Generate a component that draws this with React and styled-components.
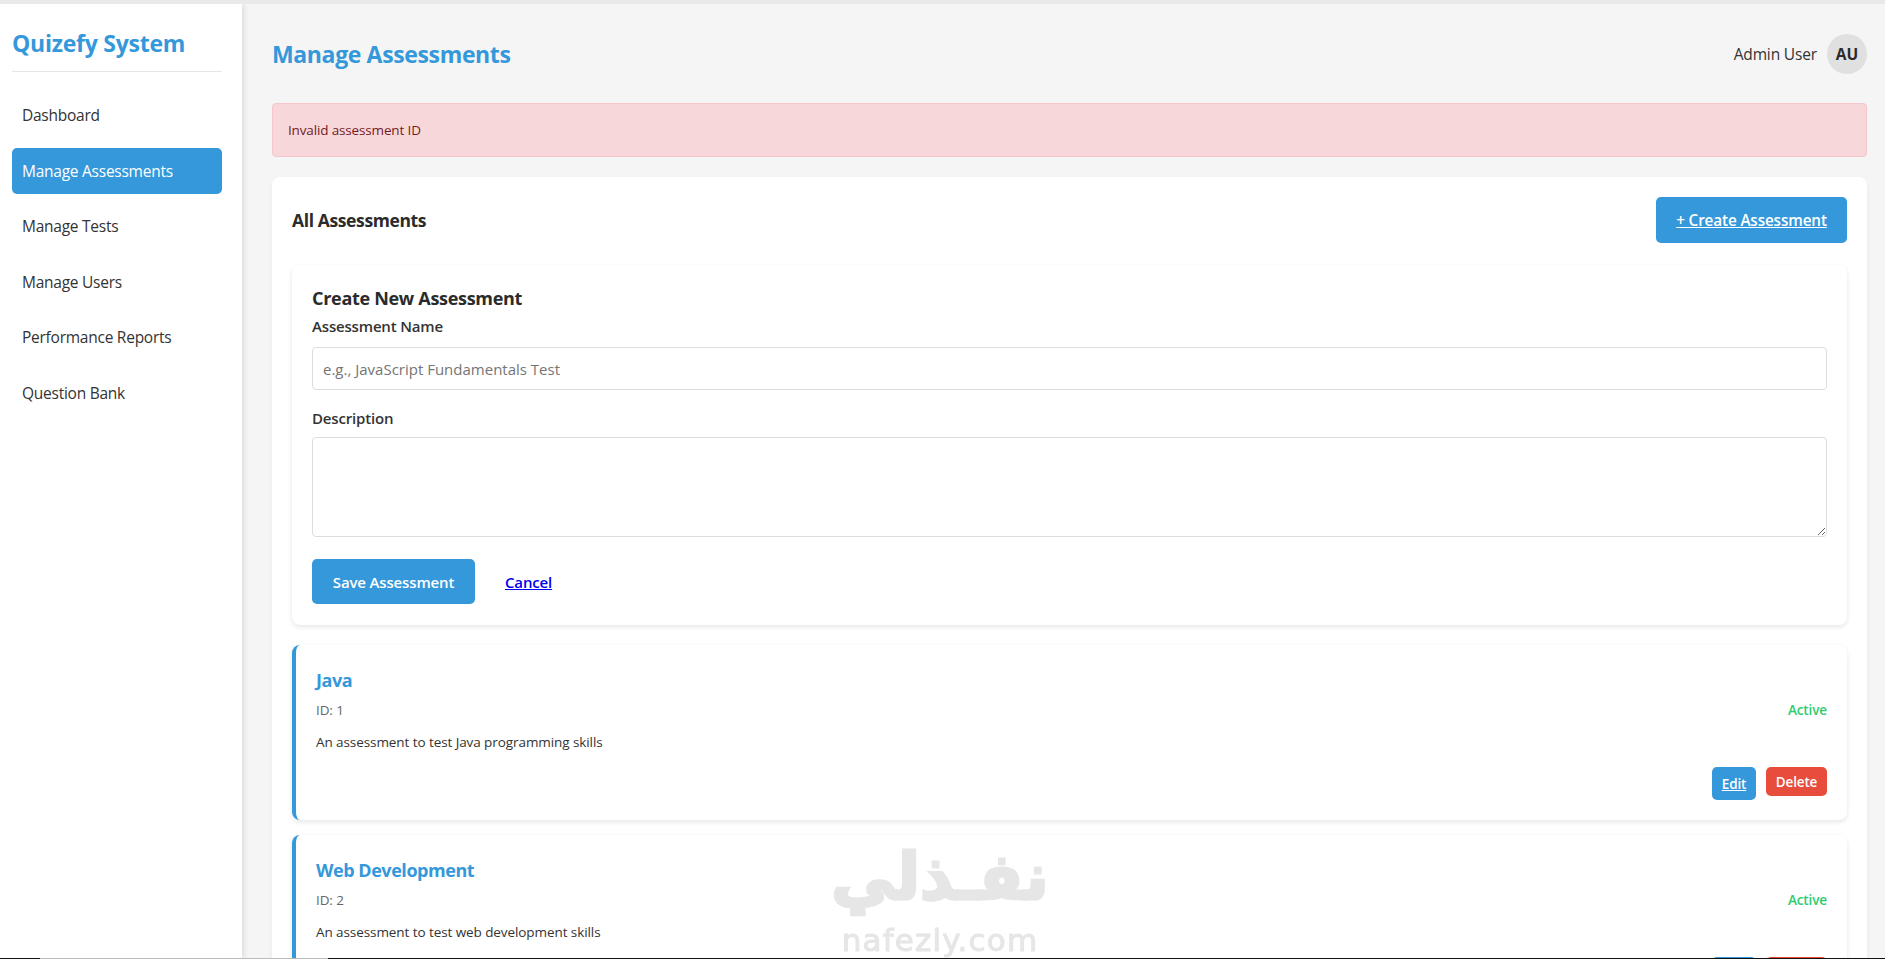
import React from "react";
import styled, { createGlobalStyle } from "styled-components";

const Global = createGlobalStyle`
  * { box-sizing: border-box; }
  html, body { margin: 0; padding: 0; height: 959px; overflow: hidden; }
  body { font-family: "Open Sans", "Noto Sans", "Liberation Sans", sans-serif; color: #2b2b2b; background: #f5f5f5; }
`;
const TopEdge = styled.div`height: 4px; background: #e9e9e9;`;
const Shell = styled.div`display: flex; height: 955px; overflow: hidden;`;
const Sidebar = styled.aside`
  width: 242px; flex: none; background: #fff; padding: 19px 20px 0 12px;
  box-shadow: 2px 0 5px rgba(0,0,0,.1);
  position: relative;
`;
const Logo = styled.h2`
  margin: 0; height: 49px; font-size: 23px; line-height: 40px; font-weight: 700;
  letter-spacing: -.25px; color: #3498db; border-bottom: 1px solid #e6e6e6; white-space: nowrap;
`;
const Nav = styled.nav`display: flex; flex-direction: column; gap: 9.5px; margin-top: 20px;`;
const NavItem = styled.a`
  display: flex; align-items: center; height: 46px; padding: 0 10px; border-radius: 5px;
  font-size: 15.5px; letter-spacing: -.25px;
  color: ${p => (p.$active ? "#fff" : "#333")};
  background: ${p => (p.$active ? "#3498db" : "transparent")};
`;
const Main = styled.main`flex: 1; min-width: 0; padding: 0 18px 0 30px; height: 955px; overflow: hidden;`;
const Header = styled.header`
  display: flex; justify-content: space-between; align-items: center; height: 99px;
`;
const PageTitle = styled.h1`margin: 0; font-size: 23px; font-weight: 700; letter-spacing: -.36px; color: #3498db;`;
const UserBox = styled.div`display: flex; align-items: center; gap: 10px; font-size: 15.5px; letter-spacing: -.15px; color: #333;`;
const Avatar = styled.div`
  width: 40px; height: 40px; border-radius: 50%; background: #e0e0e0; font-weight: 700; font-size: 15.5px;
  display: flex; align-items: center; justify-content: center; color: #2b2b2b; letter-spacing: 0;
`;
const Alert = styled.div`
  height: 54px; padding: 0 15px; display: flex; align-items: center; background: #f8d7da; border: 1px solid #f5c6cb;
  border-radius: 4px; color: #721c24; font-size: 13.5px; letter-spacing: -.15px; margin-bottom: 20px;
`;
const Panel = styled.section`
  background: #fff; border-radius: 8px; padding: 20px; box-shadow: 0 2px 5px rgba(0,0,0,.05);
`;
const PanelHead = styled.div`display: flex; justify-content: space-between; align-items: center; margin-bottom: 22px;`;
const PanelTitle = styled.h2`margin: 0; font-size: 17.5px; font-weight: 700; letter-spacing: -.38px; color: #2b2b2b;`;
const Button = styled.a`
  display: inline-flex; align-items: center; justify-content: center; border-radius: 5px;
  color: #fff; background: ${p => p.$bg || "#3498db"}; font-weight: 600;
  font-size: ${p => p.$size || 15}px; letter-spacing: -.15px;
  width: ${p => p.$w}px; height: ${p => p.$h}px;
  text-decoration: ${p => (p.$link ? "underline" : "none")};
`;
const FormCard = styled.div`
  border-radius: 8px; padding: 21px 20px 20px; height: 360px; box-shadow: 0 2px 5px rgba(0,0,0,.1); margin-bottom: 20px;
  display: flex; flex-direction: column;
`;
const FormTitle = styled.h3`margin: 0 0 5px; font-size: 18px; line-height: 25px; font-weight: 700; letter-spacing: -.3px; color: #2b2b2b;`;
const Label = styled.label`display: block; font-size: 15px; line-height: 21px; font-weight: 600; letter-spacing: -.17px; color: #333;`;
const Input = styled.input`
  display: block; width: 100%; height: 43px; margin-top: 10px; margin-bottom: 18px; padding: 0 10px; border: 1px solid #ddd; border-radius: 4px;
  font: inherit; font-size: 15px; letter-spacing: 0; outline: none;
  &::placeholder { color: #757575; }
`;
const TextArea = styled.textarea`
  display: block; width: 100%; height: 100px; margin-top: 8px; padding: 10px; border: 1px solid #ddd; border-radius: 4px; font: inherit; outline: none;
`;
const FormActions = styled.div`display: flex; align-items: center; gap: 30px; margin-top: 22px;`;
const CancelLink = styled.a`color: #0000ee; text-decoration: underline; font-size: 15px; font-weight: 600; letter-spacing: -.15px;`;
const Item = styled.article`
  height: 175px; margin-bottom: 15px; padding: 20px; border-left: 4px solid #3498db; border-radius: 8px;
  box-shadow: 0 2px 5px rgba(0,0,0,.1); display: flex; flex-direction: column;
`;
const ItemTitle = styled.h3`margin: 0; font-size: 18px; line-height: 30px; font-weight: 700; letter-spacing: -.45px; color: #3498db;`;
const MetaRow = styled.div`display: flex; justify-content: space-between; align-items: center; margin-top: 5px; height: 20px; font-size: 13.5px; letter-spacing: -.12px; color: #666;`;
const Status = styled.span`color: #2ecc71; font-weight: 600;`;
const Desc = styled.p`margin: 12px 0 0; font-size: 13.5px; line-height: 20px; letter-spacing: -.08px; color: #333;`;
const ItemActions = styled.div`display: flex; justify-content: flex-end; align-items: flex-start; gap: 10px; margin-top: 15px;`;
const Watermark = styled.div`
  position: fixed; left: 820px; top: 838px; width: 240px; color: #e6e6e6; text-align: center; pointer-events: none;
  font-family: "DejaVu Sans", sans-serif; font-weight: 700;
`;
const WatermarkArabic = styled.div`font-size: 64px; line-height: 78px; height: 78px; white-space: nowrap; -webkit-text-stroke: 3px #e6e6e6;`;
const WatermarkLatin = styled.div`font-size: 31px; font-weight: 400; line-height: 36px; margin-top: 6px; white-space: nowrap; letter-spacing: 1.2px; -webkit-text-stroke: 1px #e6e6e6;`;
const BottomEdge = styled.div`position: fixed; left: 0; right: 0; bottom: 0; height: 1.5px; display: flex; background: #111;`;
const BottomGap = styled.div`margin-left: 40px; width: 288px; background: #bbb;`;

const links = ["Dashboard", "Manage Assessments", "Manage Tests", "Manage Users", "Performance Reports", "Question Bank"];
const items = [
  { id: 1, name: "Java", desc: "An assessment to test Java programming skills" },
  { id: 2, name: "Web Development", desc: "An assessment to test web development skills" },
];

export default function App() {
  return (
    <>
      <Global />
      <TopEdge />
      <Shell>
        <Sidebar>
          <Logo>Quizefy System</Logo>
          <Nav>
            {links.map(l => <NavItem key={l} $active={l === "Manage Assessments"}>{l}</NavItem>)}
          </Nav>
        </Sidebar>
        <Main>
          <Header>
            <PageTitle>Manage Assessments</PageTitle>
            <UserBox>Admin User<Avatar>AU</Avatar></UserBox>
          </Header>
          <Alert>Invalid assessment ID</Alert>
          <Panel>
            <PanelHead>
              <PanelTitle>All Assessments</PanelTitle>
              <Button $link $w={191} $h={46} $size={15.3}>+ Create Assessment</Button>
            </PanelHead>
            <FormCard>
              <FormTitle>Create New Assessment</FormTitle>
              <Label>Assessment Name</Label>
              <Input placeholder="e.g., JavaScript Fundamentals Test" />
              <Label>Description</Label>
              <TextArea />
              <FormActions>
                <Button $w={163} $h={45}>Save Assessment</Button>
                <CancelLink>Cancel</CancelLink>
              </FormActions>
            </FormCard>
            {items.map(it => (
              <Item key={it.id}>
                <ItemTitle>{it.name}</ItemTitle>
                <MetaRow>ID: {it.id}<Status>Active</Status></MetaRow>
                <Desc>{it.desc}</Desc>
                <ItemActions>
                  <Button $link $w={44} $h={33} $size={13.5}>Edit</Button>
                  <Button $bg="#e74c3c" $w={61} $h={29} $size={13.5}>Delete</Button>
                </ItemActions>
              </Item>
            ))}
          </Panel>
        </Main>
      </Shell>
      <Watermark>
        <WatermarkArabic>نفـذلي</WatermarkArabic>
        <WatermarkLatin>nafezly.com</WatermarkLatin>
      </Watermark>
      <BottomEdge><BottomGap /></BottomEdge>
    </>
  );
}
